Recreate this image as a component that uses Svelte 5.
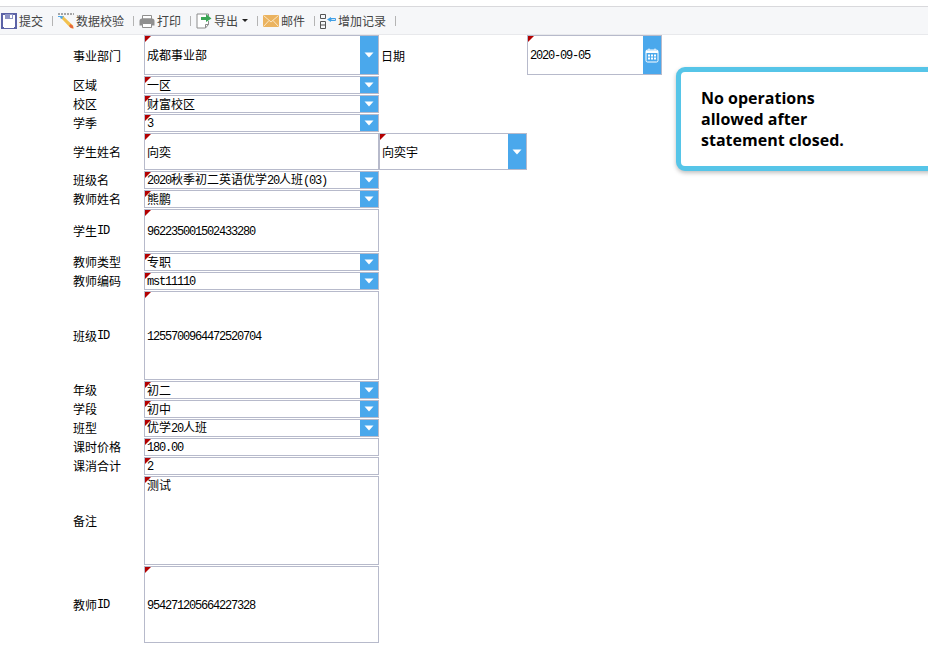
<script>
  const rows = [
    { label: '事业部门', value: '成都事业部', h: 40, kind: 'select', extra: 'date' },
    { label: '区域', value: '一区', h: 18, kind: 'select' },
    { label: '校区', value: '财富校区', h: 18, kind: 'select' },
    { label: '学季', value: '3', h: 18, kind: 'select' },
    { label: '学生姓名', value: '向奕', h: 37, kind: 'input', extra: 'name' },
    { label: '班级名', value: '2020秋季初二英语优学20人班(03)', h: 18, kind: 'select' },
    { label: '教师姓名', value: '熊鹏', h: 18, kind: 'select' },
    { label: '学生ID', value: '962235001502433280', h: 43, kind: 'input' },
    { label: '教师类型', value: '专职', h: 18, kind: 'select' },
    { label: '教师编码', value: 'mst11110', h: 18, kind: 'select' },
    { label: '班级ID', value: '1255700964472520704', h: 89, kind: 'input' },
    { label: '年级', value: '初二', h: 18, kind: 'select' },
    { label: '学段', value: '初中', h: 18, kind: 'select' },
    { label: '班型', value: '优学20人班', h: 18, kind: 'select' },
    { label: '课时价格', value: '180.00', h: 18, kind: 'input' },
    { label: '课消合计', value: '2', h: 18, kind: 'input' },
    { label: '备注', value: '测试', h: 89, kind: 'area' },
    { label: '教师ID', value: '954271205664227328', h: 77, kind: 'input' }
  ];
  const split = (s) => s.match(/[\x00-\x7f]+|[^\x00-\x7f]+/g).map((t) => ({ t, lat: /^[\x00-\x7f]/.test(t) }));
</script>

{#snippet txt(s)}
  {#each split(s) as p}<span class={p.lat ? 'lat' : ''}>{p.t}</span>{/each}
{/snippet}

{#snippet arrow()}
  <span class="btn"><svg width="10" height="6" viewBox="0 0 10 6"><path d="M0.5 0.5H9.5L5 5.5Z" fill="#fff" /></svg></span>
{/snippet}

{#snippet field(value, kind, cls)}
  <div class="field {cls} {kind === 'area' ? 'area' : ''}">
    <span class="val">{@render txt(value)}</span>
    {#if kind === 'select'}{@render arrow()}{/if}
  </div>
{/snippet}

<div class="page">
  <div class="toolbar">
    <div class="item first">
      <svg width="16" height="16" viewBox="0 0 16 16"><path d="M1 1H15V15H1Z" fill="#fff" stroke="#5b62a6" stroke-width="2"/><path d="M4 1H12V6H4Z" fill="#8d93c4"/><path d="M9 2H11V5H9Z" fill="#fff"/><path d="M3 9H13V15H3Z" fill="#fff"/></svg>
      <span>提交</span>
    </div>
    <i class="sep"></i>
    <div class="item">
      <svg width="16" height="16" viewBox="0 0 16 16"><path d="M0 1H16" stroke="#555" stroke-dasharray="2 1" fill="none"/><path d="M0 3.5H6" stroke="#4aa8ec" fill="none"/><path d="M3 5L5 3L15 12.5L15.5 15.5L12.5 15Z" fill="#f2c14e"/><path d="M12.5 11L15 13L15.5 15.5L13 15L11 13Z" fill="#e8663c"/><path d="M2 4L4 3L5 5L3 6Z" fill="#4aa8ec"/></svg>
      <span>数据校验</span>
    </div>
    <i class="sep"></i>
    <div class="item">
      <svg width="16" height="16" viewBox="0 0 16 16"><path d="M3.5 2.5H12.5V6H3.5Z" fill="#fff" stroke="#8f8f8f"/><path d="M0.5 8Q0.5 5.5 3 5.5H13Q15.5 5.5 15.5 8V12.5H0.5Z" fill="#8f8f8f"/><path d="M3.5 10.5H12.5V14.5H3.5Z" fill="#fff" stroke="#8f8f8f"/></svg>
      <span>打印</span>
    </div>
    <i class="sep"></i>
    <div class="item">
      <svg width="16" height="16" viewBox="0 0 16 16"><path d="M12.5 8V11.5L9.5 15H1V1H12.5V3" fill="#fff" stroke="#8c8c8c"/><path d="M9.5 15V11.5H12.5" fill="none" stroke="#8c8c8c"/><path d="M5 4H10V1L15.5 5.5L10 9V7H5Z" fill="#3aa655"/></svg>
      <span>导出</span>
      <svg class="caret" width="6" height="3" viewBox="0 0 6 3"><path d="M0 0H6L3 3Z" fill="#222"/></svg>
    </div>
    <i class="sep"></i>
    <div class="item">
      <svg width="16" height="12" viewBox="0 0 16 12"><path d="M0 0H16V12H0Z" fill="#ebb35f"/><path d="M0.5 0.5L8 7L15.5 0.5M0.5 11.5L6 5.5M15.5 11.5L10 5.5" fill="none" stroke="#fbe7c6"/></svg>
      <span>邮件</span>
    </div>
    <i class="sep"></i>
    <div class="item">
      <svg width="16" height="16" viewBox="0 0 16 16"><path d="M0.5 1.5H5.5V5.5H0.5ZM0.5 8.5H5.5V15.5H0.5ZM0.5 12H5.5" fill="none" stroke="#555"/><path d="M7 6.5L11 4V9Z" fill="#3f9fe6"/><path d="M11 5.5H15.5V7.5H11Z" fill="#cfe5f7" stroke="#3f9fe6"/></svg>
      <span>增加记录</span>
    </div>
    <i class="sep"></i>
  </div>

  <div class="form">
    {#each rows as r}
      <div class="row" style="height:{r.h}px">
        <div class="label {r.h === 18 ? 'small' : ''}">{@render txt(r.label)}</div>
        {@render field(r.value, r.kind, 'main')}
        {#if r.extra === 'date'}
          <div class="label second">日期</div>
          <div class="field datef">
            <span class="val"><span class="lat">2020-09-05</span></span>
            <span class="btn">
              <svg width="14" height="15" viewBox="0 0 14 15"><rect x="1" y="2" width="12" height="12" rx="1.5" fill="none" stroke="#fff"/><path d="M1 2.5H13V5H1Z" fill="#fff"/><path d="M3 6.5H5V8.5H3ZM6 6.5H8V8.5H6ZM9 6.5H11V8.5H9ZM3 9.5H5V11.5H3ZM6 9.5H8V11.5H6ZM9 9.5H11V11.5H9Z" fill="#fff"/><path d="M4 0.5V2M10 0.5V2" stroke="#fff"/></svg>
            </span>
          </div>
        {:else if r.extra === 'name'}
          {@render field('向奕宇', 'select', 'namef')}
        {/if}
      </div>
    {/each}
  </div>

  <div class="notice">No operations<br />allowed after<br />statement closed.</div>
</div>

<style>
  :global(body) {
    margin: 0;
    background: #fff;
  }
  .page {
    position: relative;
    width: 928px;
    height: 655px;
    overflow: hidden;
    padding-top: 6px;
    box-sizing: border-box;
    font-family: "Noto Sans CJK SC", "Liberation Sans", sans-serif;
    font-size: 12px;
    color: #000;
  }
  .toolbar {
    box-sizing: border-box;
    height: 29px;
    border-top: 1px solid #d9d9dc;
    border-bottom: 1px solid #e8e9ec;
    background: #f6f7f9;
    display: flex;
    align-items: center;
    color: #444;
  }
  .item {
    display: flex;
    align-items: center;
    gap: 2px;
    margin-left: 5px;
    margin-right: 9px;
    height: 16px;
    line-height: 16px;
  }
  .item svg {
    flex: none;
    display: block;
  }
  .item.first {
    margin-left: 1px;
  }
  .item .caret {
    margin-left: 2px;
  }
  .sep {
    width: 1px;
    height: 10px;
    background: #b4b4b4;
    flex: none;
  }
  .form {
    display: flex;
    flex-direction: column;
    gap: 1px;
  }
  .row {
    display: flex;
    align-items: stretch;
  }
  .label {
    box-sizing: border-box;
    width: 144px;
    padding-left: 73px;
    display: flex;
    align-items: center;
    flex: none;
    white-space: nowrap;
  }
  .label.small {
    padding-bottom: 2px;
  }
  .label.second {
    width: 148px;
    padding-left: 2px;
  }
  .field {
    box-sizing: border-box;
    position: relative;
    border: 1px solid #b7bacb;
    display: flex;
    align-items: center;
    flex: none;
    background: #fff;
  }
  .field::before {
    content: "";
    position: absolute;
    left: 0;
    top: 0;
    width: 6px;
    height: 6px;
    background: #b30000;
    clip-path: polygon(0 0, 100% 0, 0 100%);
  }
  .main {
    width: 235px;
  }
  .namef {
    width: 148px;
  }
  .datef {
    width: 135px;
  }
  .area {
    align-items: flex-start;
  }
  .val {
    flex: 1;
    padding-left: 2px;
    line-height: 16px;
    white-space: nowrap;
  }
  .lat {
    font-family: "Liberation Mono", "DejaVu Sans Mono", monospace;
    font-size: 12px;
    letter-spacing: -1.2px;
  }
  .btn {
    align-self: stretch;
    width: 18px;
    flex: none;
    background: #4aa8ec;
    display: flex;
    align-items: center;
    justify-content: center;
  }
  .notice {
    position: absolute;
    left: 676px;
    top: 67px;
    width: 300px;
    height: 104px;
    box-sizing: border-box;
    border: 5px solid #56c5e8;
    border-radius: 9px;
    background: #fff;
    box-shadow: 0 2px 4px rgba(0, 0, 0, 0.25);
    padding: 16px 20px;
    font-family: "Open Sans", "Liberation Sans", sans-serif;
    font-weight: 700;
    font-size: 16px;
    line-height: 21px;
    color: #000;
  }
</style>
